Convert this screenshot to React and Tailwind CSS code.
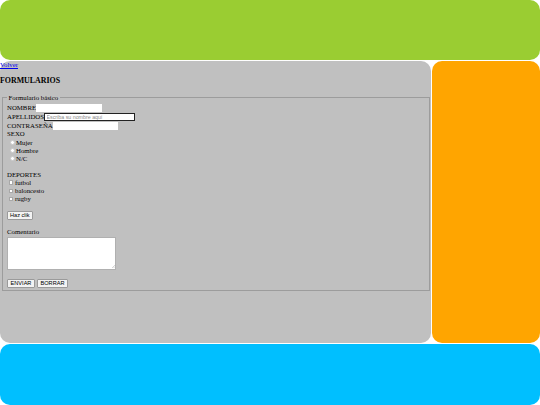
const Radio = ({ label }) => (
  <label className="flex items-center h-[8px] pl-[3px]">
    <input type="radio" name="sexo" className="appearance-none w-[4.5px] h-[4.5px] rounded-full bg-white border-[0.5px] border-[#c8c8c8] mr-[1.5px]" />
    <span>{label}</span>
  </label>
);

const Check = ({ label }) => (
  <label className="flex items-center h-[8.3px] pl-[1.5px]">
    <input type="checkbox" className="appearance-none w-[4.5px] h-[4.5px] bg-white border-[0.5px] border-[#a8a8a8] mr-[2px]" />
    <span>{label}</span>
  </label>
);

const Boton = ({ children, className = "" }) => (
  <button className={`h-[9px] px-[2px] bg-[#f3f3f3] border-[0.5px] border-[#9a9a9a] rounded-[1px] text-[5.6px] leading-none font-['Liberation_Sans',Arial,sans-serif] ${className}`}>
    {children}
  </button>
);

const App = () => {
  return (
    <div className="w-[540px] h-[405px] grid grid-cols-[431px_108px] grid-rows-[60px_282px_61px] gap-[1px] bg-white">
      {/* cabecera */}
      <header className="col-span-2 bg-[#9acd32] rounded-[10px]"></header>

      {/* contenido */}
      <main className="bg-[#c0c0c0] rounded-[10px] text-black text-[6.8px] leading-[8px] font-['Liberation_Serif','Times_New_Roman',serif]">
        <a href="#" className="block h-[8px] text-[#0000ee] underline">Volver</a>
        <h3 className="mt-[6.5px] h-[9px] leading-[9px] text-[7.9px] font-bold">FORMULARIOS</h3>

        <fieldset className="mt-[9px] ml-[2px] mr-[1px] border border-[#9c9c9c] pl-[4px] pr-[4px] pb-[2.5px]">
          <legend className="px-[1.5px] h-[8px] leading-[8px]">Formulario básico</legend>

          <div className="flex items-center h-[9px] mt-[2px]">
            <span>NOMBRE</span>
            <input type="text" className="w-[66px] h-[7.5px] bg-white outline-none" />
          </div>
          <div className="flex items-center h-[9px]">
            <span>APELLIDOS</span>
            <input
              type="text"
              placeholder="Escriba su nombre aqui"
              className="w-[91px] h-[8.5px] bg-white border border-[#222] px-[1.5px] text-[5.3px] font-['Liberation_Sans',Arial,sans-serif] placeholder:text-[#8a8a8a] outline-none"
            />
          </div>
          <div className="flex items-center h-[8.5px]">
            <span>CONTRASEÑA</span>
            <input type="password" className="w-[65px] h-[7.5px] bg-white outline-none" />
          </div>
          <div className="h-[8.5px]">SEXO</div>
          <Radio label="Mujer" />
          <Radio label="Hombre" />
          <Radio label="N/C" />

          <div className="mt-[8px] h-[8px]">DEPORTES</div>
          <Check label="futbol" />
          <Check label="baloncesto" />
          <Check label="rugby" />

          <div className="mt-[8px] flex">
            <Boton>Haz clik</Boton>
          </div>

          <div className="mt-[8px] h-[8px]">Comentario</div>
          <div className="relative w-[109px] h-[33px] mt-[0.5px] bg-white border-[0.5px] border-[#b0b0b0]">
            <textarea className="w-full h-full resize-none outline-none bg-transparent"></textarea>
            <svg className="absolute right-[0.5px] bottom-[0.5px]" width="3" height="3" viewBox="0 0 3 3">
              <path d="M3 0 L0 3 M3 1.5 L1.5 3" stroke="#999" strokeWidth="0.4" />
            </svg>
          </div>

          <div className="mt-[9px] flex gap-[2px]">
            <Boton className="w-[28px]">ENVIAR</Boton>
            <Boton className="w-[31px]">BORRAR</Boton>
          </div>
        </fieldset>
      </main>

      {/* lateral */}
      <aside className="bg-[#ffa500] rounded-[10px]"></aside>

      {/* pie */}
      <footer className="col-span-2 bg-[#00bfff] rounded-[10px]"></footer>
    </div>
  );
};

export default App;
